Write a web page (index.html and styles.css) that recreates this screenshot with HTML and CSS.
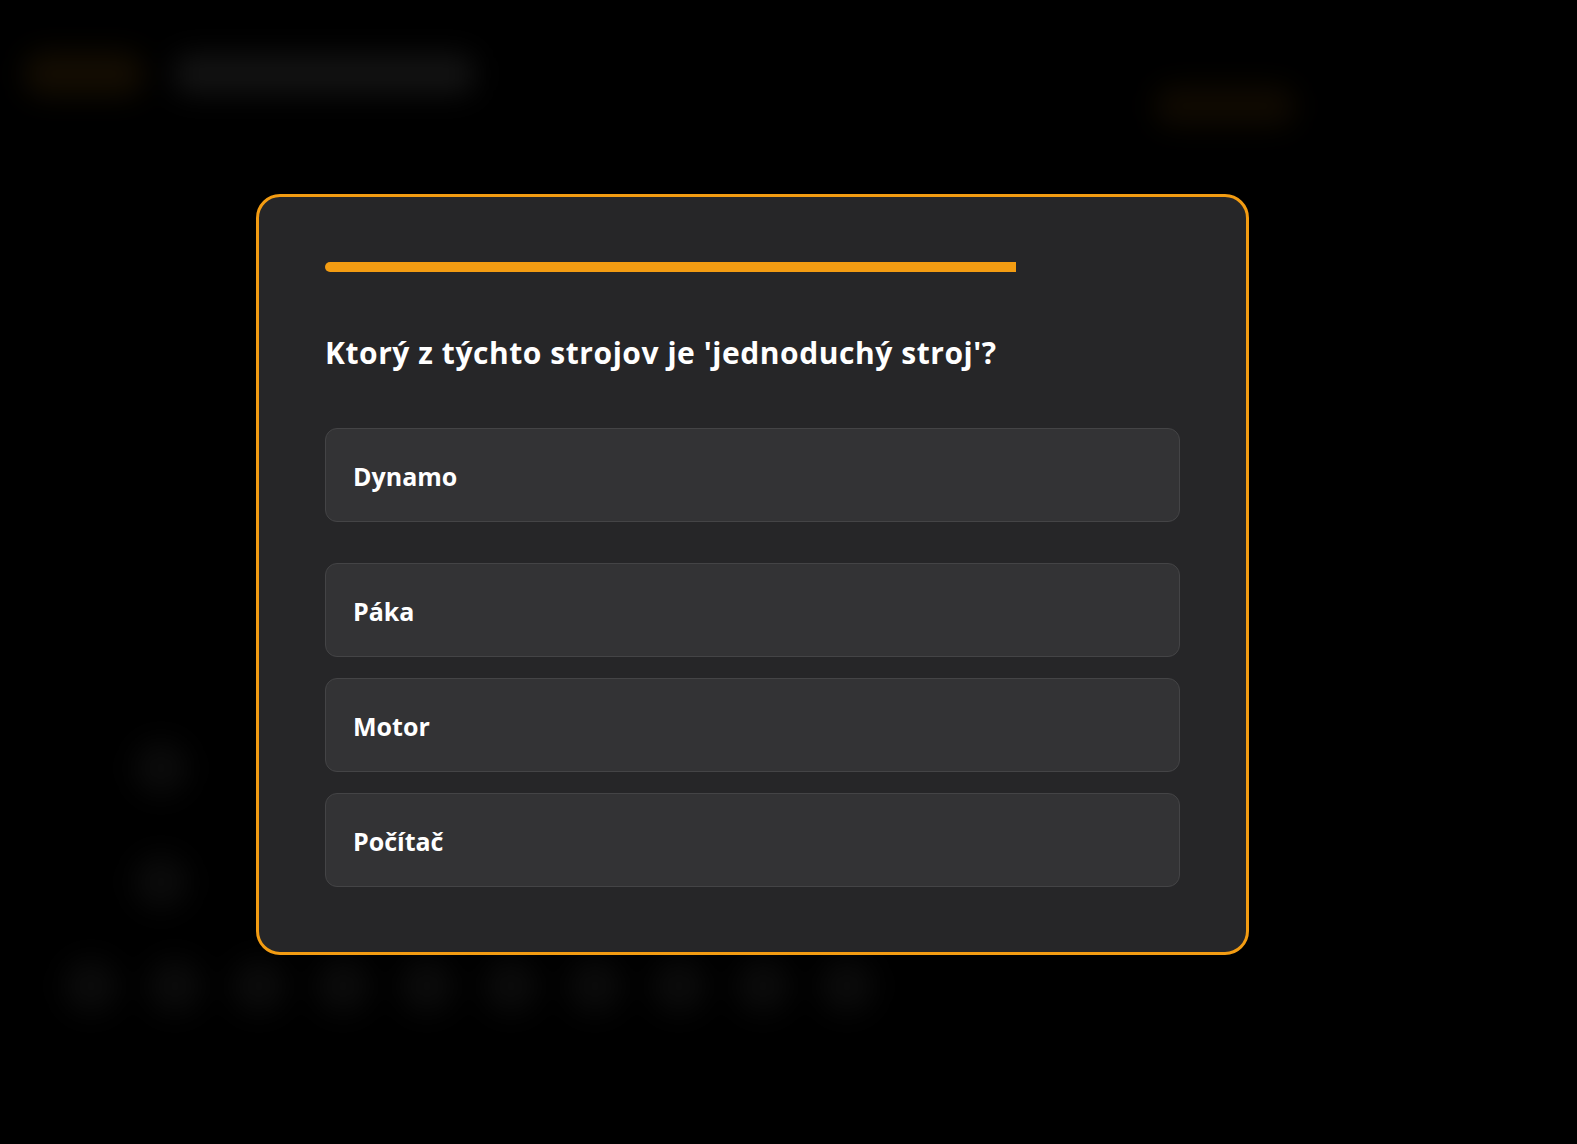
FILE: index.html
```html
<!DOCTYPE html>
<html lang="sk">
<head>
<meta charset="utf-8">
<title>Kvíz</title>
<link rel="stylesheet" href="styles.css">
</head>
<body>
<div class="page">
  <header class="page-header">
    <div class="brand">
      <div class="brand-logo"></div>
      <div class="brand-name"></div>
    </div>
    <div class="header-actions">
      <div class="header-btn"></div>
    </div>
  </header>
  <div class="page-side">
    <span class="dot"></span>
    <span class="dot"></span>
  </div>
  <div class="page-dots">
    <span class="dot"></span><span class="dot"></span><span class="dot"></span><span class="dot"></span><span class="dot"></span><span class="dot"></span><span class="dot"></span><span class="dot"></span><span class="dot"></span><span class="dot"></span>
  </div>
</div>

<div class="overlay">
  <div class="quiz-card">
    <div class="progress"><div class="progress-fill"></div></div>
    <h2 class="question">Ktorý z týchto strojov je 'jednoduchý stroj'?</h2>
    <div class="options">
      <button class="option option-first">Dynamo</button>
      <button class="option">Páka</button>
      <button class="option">Motor</button>
      <button class="option">Počítač</button>
    </div>
  </div>
</div>
</body>
</html>
```

FILE: styles.css
```css
* { box-sizing: border-box; }

html, body {
  margin: 0;
  padding: 0;
  height: 100%;
  background: #000;
  font-family: "Open Sans", Roboto, "Liberation Sans", sans-serif;
  overflow: hidden;
}

/* blurred page behind the modal */
.page {
  filter: blur(14px);
  padding: 52px 20px 0 24px;
}

.page-header {
  display: flex;
  justify-content: space-between;
  align-items: flex-start;
}

.brand {
  display: flex;
  align-items: center;
  gap: 30px;
}

.brand-logo {
  width: 120px;
  height: 44px;
  border-radius: 20px;
  background: #140d02;
}

.brand-name {
  width: 300px;
  height: 40px;
  border-radius: 14px;
  background: #131313;
}

.header-actions {
  margin-top: 34px;
  margin-right: 262px;
}

.header-btn {
  width: 140px;
  height: 40px;
  border-radius: 18px;
  background: #100a01;
}

.page-side {
  display: flex;
  flex-direction: column;
  gap: 60px;
  margin-top: 615px;
  padding-left: 110px;
}

.page-dots {
  display: flex;
  gap: 30px;
  margin-top: 50px;
  padding-left: 40px;
}

.dot {
  width: 54px;
  height: 54px;
  border-radius: 50%;
  background: #0b0b0b;
}

/* modal */
.overlay {
  position: fixed;
  inset: 0;
  padding: 194px 0 0 256px;
}

.quiz-card {
  width: 993px;
  background: #262628;
  border: 3px solid #f39c12;
  border-radius: 24px;
  padding: 65px 66px;
}

.progress {
  height: 10px;
}

.progress-fill {
  width: 691px;
  height: 10px;
  background: #f39c12;
  border-radius: 5px 0 0 5px;
}

.question {
  margin: 63px 0 57px 0;
  font-size: 30px;
  line-height: 36px;
  font-weight: 700;
  color: #ffffff;
  letter-spacing: 0.55px;
}

.options {
  display: flex;
  flex-direction: column;
  gap: 21px;
}

.option {
  display: block;
  width: 100%;
  height: 94px;
  padding: 2px 27px 0 27px;
  text-align: left;
  background: #333335;
  border: 1px solid #444446;
  border-radius: 12px;
  color: #ffffff;
  font-family: "Open Sans", Roboto, "Liberation Sans", sans-serif;
  font-size: 25px;
  font-weight: 700;
  line-height: 36px;
  cursor: pointer;
}

.option-first {
  margin-bottom: 20px;
}
```
